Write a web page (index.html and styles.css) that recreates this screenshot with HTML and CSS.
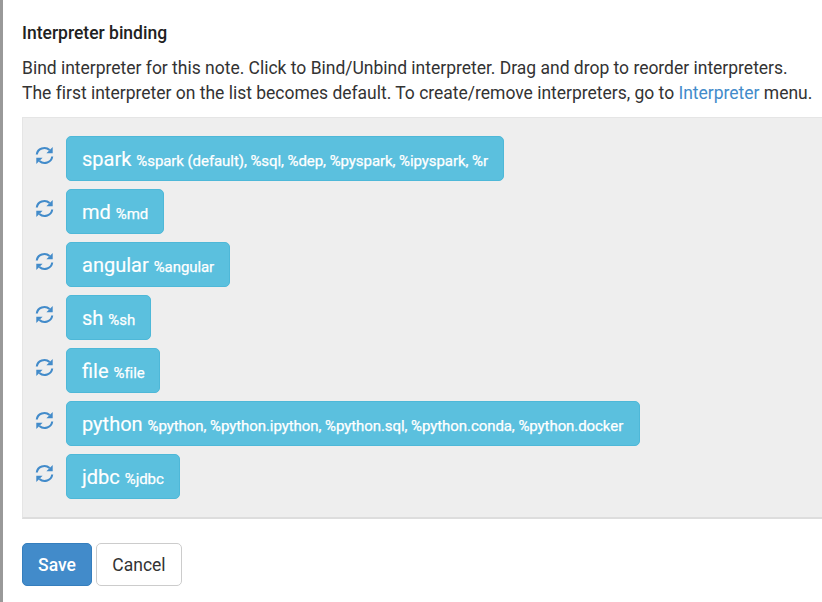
FILE: index.html
```html
<!DOCTYPE html>
<html lang="en">
<head>
<meta charset="utf-8">
<title>Interpreter binding</title>
<link rel="stylesheet" href="styles.css">
</head>
<body>
<svg class="defs" width="0" height="0"><symbol id="refresh" viewBox="-.5 -.5 19 19"><path d="M1.3 8A7.6 7.2 0 0 1 14.1 3.5M16.7 10A7.6 7.2 0 0 1 3.9 14.5" fill="none" stroke="currentColor" stroke-width="2.1"/><path d="M17.2.5V6.8H10.9ZM.8 17.5V11.2H7.1Z" fill="currentColor"/></symbol></svg>
<main class="settings">
<h4 class="title">Interpreter binding</h4>
<p class="intro"><span class="line line-first">Bind interpreter for this note. Click to Bind/Unbind interpreter. Drag and drop to reorder interpreters.</span><span class="line line-second">The first interpreter on the list becomes default. To create/remove interpreters, go to <a class="link">Interpreter</a> menu.</span></p>
<div class="list">
<div class="row"><svg class="icon"><use href="#refresh"/></svg><div class="item spark">spark <small>%spark (default), %sql, %dep, %pyspark, %ipyspark, %r</small></div></div>
<div class="row"><svg class="icon"><use href="#refresh"/></svg><div class="item md">md <small>%md</small></div></div>
<div class="row"><svg class="icon"><use href="#refresh"/></svg><div class="item angular">angular <small>%angular</small></div></div>
<div class="row"><svg class="icon"><use href="#refresh"/></svg><div class="item sh">sh <small>%sh</small></div></div>
<div class="row"><svg class="icon"><use href="#refresh"/></svg><div class="item file">file <small>%file</small></div></div>
<div class="row"><svg class="icon"><use href="#refresh"/></svg><div class="item python">python <small>%python, %python.ipython, %python.sql, %python.conda, %python.docker</small></div></div>
<div class="row"><svg class="icon"><use href="#refresh"/></svg><div class="item jdbc">jdbc <small>%jdbc</small></div></div>
</div>
<div class="actions"><button class="btn save">Save</button><button class="btn cancel">Cancel</button></div>
</main>
</body>
</html>
```
FILE: styles.css
```css
* { box-sizing: border-box; }
body { margin: 0; background: #fff; font: 400 17.5px/25px Roboto, sans-serif; color: #333; overflow: hidden; }
.defs { display: block; }
.settings { height: 602px; border-left: 3px solid #999; padding: 21px 0 0 19px; }
.title { margin: 0 0 10px; font-size: 17.5px; font-weight: 500; line-height: 25px; color: #212121; }
.intro { margin: 0 0 11px; letter-spacing: -0.012px; }
.line { display: block; white-space: nowrap; }
.link { color: #428bca; }
.list { height: 402px; padding: 18px 0 0 12px; background: #eee; border: 1px solid #e5e5e5; border-right: 0; border-bottom: 2px solid #ddd; }
.row { display: flex; height: 45px; margin-bottom: 8px; }
.icon { width: 19px; height: 19px; margin: 10px 12px 0 0; color: #428bca; }
.item { height: 45px; padding: 1px 15px 0; border: 1px solid #4eb8d8; border-radius: 5px; background: #5bc0de; color: #fff; font-size: 20px; line-height: 43px; white-space: nowrap; -webkit-text-stroke: 0.15px #fff; }
.item small { font-size: 15px; letter-spacing: -0.07px; -webkit-text-stroke: 0.25px #fff; }
.spark { width: 438px; }
.md { width: 98px; }
.angular { width: 164px; }
.sh { width: 85px; }
.file { width: 94px; }
.python { width: 574px; }
.jdbc { width: 114px; }
.actions { display: flex; gap: 4px; margin-top: 24px; }
.btn { height: 43px; padding: 1px 0 0; border-radius: 5px; font: inherit; }
.save { width: 70px; border: 1px solid #357ebd; background: #428bca; color: #fff; font-weight: 500; }
.cancel { width: 86px; border: 1px solid #ccc; background: #fff; color: #333; }
```
